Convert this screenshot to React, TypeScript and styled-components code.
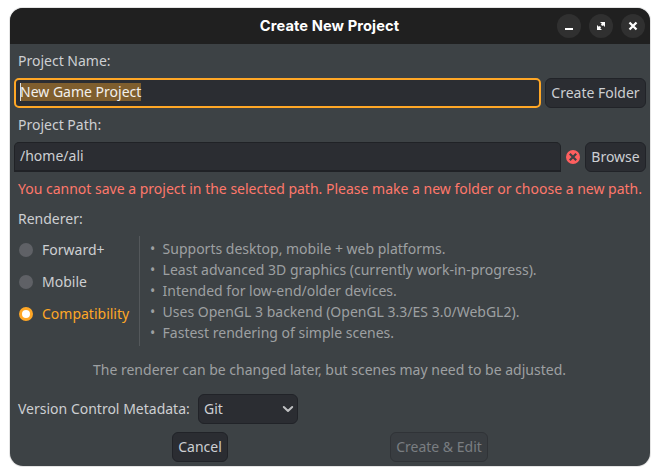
import React from "react";
import styled, { createGlobalStyle, css } from "styled-components";

const GlobalStyle = createGlobalStyle`
  * { box-sizing: border-box; }
  body { margin: 0; background: #fff; }
`;

const Page = styled.div`
  width: 660px;
  height: 476px;
  padding: 8px 10px 10px;
  background: #fff;
  font: 14px/20px "Noto Sans", sans-serif;
  color: #cdcfd2;
  white-space: nowrap;
  overflow: hidden;
`;

const Window = styled.main`
  display: flex;
  flex-direction: column;
  height: 458px;
  border-radius: 13px;
  overflow: hidden;
  background: #3d4245;
  box-shadow: 0 0 0 1px #e4e4e4;
`;

const TitleBar = styled.header`
  display: grid;
  grid-template-columns: 1fr auto 1fr;
  align-items: center;
  flex: none;
  height: 36px;
  padding-right: 5px;
  background: #202020;
`;

const Title = styled.h1`
  grid-column: 2;
  margin: 0;
  padding-left: 4px;
  font: 700 14.67px/20px Inter, sans-serif;
  letter-spacing: 0.09px;
  color: #fff;
`;

const WindowControls = styled.div`
  display: flex;
  justify-content: flex-end;
  gap: 8px;
`;

const WindowButton = styled.button`
  display: block;
  width: 24px;
  height: 24px;
  padding: 0;
  border: 0;
  border-radius: 50%;
  background: #303030;
  color: #fff;

  svg { display: block; }
`;

const Content = styled.div`
  display: flex;
  flex-direction: column;
  padding: 0 4px;
`;

const Label = styled.div`
  height: 34px;
  line-height: 34px;
  padding-left: 4px;
`;

const ErrorText = styled(Label)`
  color: #ff786b;
`;

const SectionLabel = styled(Label)`
  height: 30px;
  line-height: 26px;
`;

const FieldRow = styled.div`
  display: flex;
  gap: 4px;
  height: 30px;
`;

const Field = styled.div<{ $focused?: boolean }>`
  flex: 1;
  height: 30px;
  padding: 3px 5px;
  border: 1px solid #202226;
  border-bottom-width: 2px;
  border-radius: 5px 5px 0 0;
  background: #2b2d32;
  ${(p) =>
    p.$focused &&
    css`
      padding: 2px 4px;
      border: 2px solid #ffa726;
      border-radius: 5px;
    `}
`;

const Selection = styled.span`
  display: inline-block;
  height: 18px;
  line-height: 17px;
  background: #7f5e2e;
  box-shadow: inset 1px 0 #dfdfdf;
  color: #f2f0ed;
`;

const Button = styled.button<{ $width: number; $disabled?: boolean }>`
  flex: none;
  width: ${(p) => p.$width}px;
  height: 30px;
  padding: 0;
  border: 1px solid #212328;
  border-radius: 6px;
  background: #2b2d32;
  color: #cdcfd2;
  font: inherit;
  line-height: 26px;
  ${(p) =>
    p.$disabled &&
    css`
      border-color: #303337;
      background: #393d41;
      color: #7a7e81;
    `}
`;

const StatusIcon = styled.svg`
  flex: none;
  align-self: center;
  width: 16px;
  height: 16px;
`;

const RendererPanel = styled.section`
  display: flex;
  height: 110px;
`;

const RadioList = styled.div`
  display: flex;
  flex-direction: column;
  width: 125px;
  height: 96px;
  margin-top: -2px;
`;

const RadioRow = styled.label<{ $active?: boolean }>`
  display: flex;
  align-items: center;
  gap: 9px;
  height: 32px;
  padding-left: 5px;
  color: ${(p) => (p.$active ? "#ffa726" : "#cdcfd2")};
`;

const RadioDot = styled.span<{ $active?: boolean }>`
  width: 14px;
  height: 14px;
  border-radius: 50%;
  background: ${(p) => (p.$active ? "#fff" : "#5f6166")};
  border: ${(p) => (p.$active ? "3px solid #ffa726" : "0")};
`;

const Features = styled.ul`
  flex: 1;
  margin: 0;
  padding: 3px 0 0 10px;
  border-left: 1px solid #54585b;
  list-style: none;
  color: #9da0a2;
`;

const Feature = styled.li`
  display: flex;
  height: 21px;
  line-height: 20px;

  &::before {
    content: "•";
    width: 12.6px;
  }
`;

const Note = styled.p`
  height: 48px;
  margin: 0;
  padding-right: 1px;
  line-height: 48px;
  text-align: center;
  color: #9da0a2;
`;

const VersionRow = styled.div`
  display: flex;
  height: 30px;
`;

const VersionLabel = styled.span`
  width: 184px;
  padding-left: 4px;
  line-height: 30px;
`;

const Select = styled(Button)`
  display: flex;
  align-items: center;
  justify-content: space-between;
  padding: 0 1px 0 5px;
`;

const Actions = styled.footer`
  display: flex;
  gap: 162px;
  margin-top: 8px;
  padding-left: 158px;
`;

const renderers = ["Forward+", "Mobile", "Compatibility"];
const features = [
  "Supports desktop, mobile + web platforms.",
  "Least advanced 3D graphics (currently work-in-progress).",
  "Intended for low-end/older devices.",
  "Uses OpenGL 3 backend (OpenGL 3.3/ES 3.0/WebGL2).",
  "Fastest rendering of simple scenes.",
];

export default function App() {
  return (
    <>
      <GlobalStyle />
      <Page>
        <Window>
          <TitleBar>
            <Title>Create New Project</Title>
            <WindowControls>
              <WindowButton aria-label="Minimize">
                <svg width="24" height="24"><path d="M8 14h8v2H8z" fill="currentColor" /></svg>
              </WindowButton>
              <WindowButton aria-label="Maximize">
                <svg width="24" height="24">
                  <path d="M11 8h5v5l-1.8-1.8-.9.9-1.4-1.4.9-.9zM8 11l1.8 1.8.9-.9 1.4 1.4-.9.9L13 16H8z" fill="currentColor" />
                </svg>
              </WindowButton>
              <WindowButton aria-label="Close">
                <svg width="24" height="24"><path d="M8.5 8.5l7 7M15.5 8.5l-7 7" stroke="currentColor" strokeWidth="2.3" /></svg>
              </WindowButton>
            </WindowControls>
          </TitleBar>
          <Content>
            <Label>Project Name:</Label>
            <FieldRow>
              <Field $focused><Selection>New Game Project</Selection></Field>
              <Button $width={101}>Create Folder</Button>
            </FieldRow>
            <Label>Project Path:</Label>
            <FieldRow>
              <Field>/home/ali</Field>
              <StatusIcon viewBox="0 0 16 16">
                <circle cx="8" cy="8" r="7" fill="#ff5f5f" />
                <path d="M4.8 4.8l6.4 6.4M11.2 4.8l-6.4 6.4" stroke="#3d4245" strokeWidth="2.2" />
              </StatusIcon>
              <Button $width={61}>Browse</Button>
            </FieldRow>
            <ErrorText>You cannot save a project in the selected path. Please make a new folder or choose a new path.</ErrorText>
            <SectionLabel>Renderer:</SectionLabel>
            <RendererPanel>
              <RadioList>
                {renderers.map((name) => (
                  <RadioRow key={name} $active={name === "Compatibility"}>
                    <RadioDot $active={name === "Compatibility"} />
                    {name}
                  </RadioRow>
                ))}
              </RadioList>
              <Features>
                {features.map((text) => <Feature key={text}>{text}</Feature>)}
              </Features>
            </RendererPanel>
            <Note>The renderer can be changed later, but scenes may need to be adjusted.</Note>
            <VersionRow>
              <VersionLabel>Version Control Metadata:</VersionLabel>
              <Select $width={100}>
                Git
                <svg width="16" height="16"><path d="M3.8 6l4.2 4 4.2-4" fill="none" stroke="#bfc0c2" strokeWidth="2" strokeLinecap="round" strokeLinejoin="round" /></svg>
              </Select>
            </VersionRow>
            <Actions>
              <Button $width={56}>Cancel</Button>
              <Button $width={98} $disabled>Create &amp; Edit</Button>
            </Actions>
          </Content>
        </Window>
      </Page>
    </>
  );
}
